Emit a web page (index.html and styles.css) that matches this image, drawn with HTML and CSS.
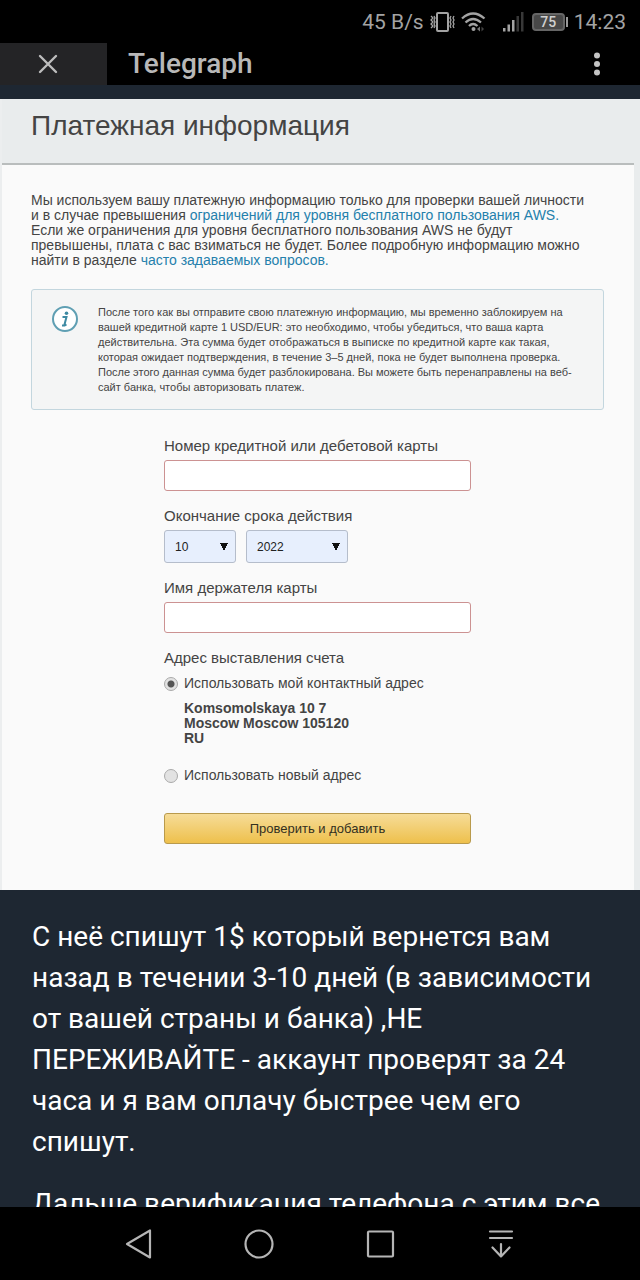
FILE: index.html
```html
<!DOCTYPE html>
<html lang="ru">
<head>
  <meta charset="UTF-8">
  <meta name="viewport" content="width=device-width, initial-scale=1.0">
  <title>Telegraph</title>
  <link rel="stylesheet" href="styles.css">
</head>
<body>
  <div class="status-bar">
    <span>45 B/s</span>
    <svg class="icon-vibrate" width="26" height="20" viewBox="0 0 26 20" fill="none" stroke="#a3a3a3">
      <rect x="7" y="1" width="11" height="18" rx="1" stroke-width="2"/>
      <path d="M1 4l2 2-2 2 2 2-2 2 2 2-2 2M4 4l1 2-1 2 1 2-1 2 1 2-1 2M21 4l-1 2 1 2-1 2 1 2-1 2 1 2M24 4l-1 2 1 2-1 2 1 2-1 2 1 2" stroke-width="1.3"/>
    </svg>
    <svg class="icon-wifi" width="25" height="20" viewBox="0 0 25 20" fill="none" stroke="#a3a3a3" stroke-width="2.300">
      <path d="M1 6.500Q12 -3.500 23.500 6.500M4.500 10.500Q12 3.500 20 10.500M8 14Q12 10 16.500 14"/>
      <circle cx="12.500" cy="17" r="2" fill="#a3a3a3" stroke="none"/>
      <path d="M19 14.500v5l-3-2.500z" fill="#777" stroke="none"/>
      <path d="M20.500 14.500v5l2.500-2.500z" fill="#444" stroke="none"/>
    </svg>
    <svg class="icon-signal" width="22" height="20" viewBox="0 0 22 20">
      <path d="M1 16h2.500v3.500H1zM5.500 12.500H8v7H5.500zM10 8h2.500v11.500H10z" fill="#a3a3a3"/>
      <path d="M14.500 4H17v15.500h-2.500zM19 0h2.500v19.500H19z" fill="#383838"/>
    </svg>
    <span class="battery">75</span>
    <span>14:23</span>
  </div>

  <header class="tab-bar">
    <button class="close" type="button" aria-label="Закрыть">
      <svg width="20" height="20" viewBox="0 0 20 20" fill="none" stroke="#bdbdbd" stroke-width="2.400" stroke-linecap="round">
        <path d="M2 2l16 16M18 2L2 18"/>
      </svg>
    </button>
    <h1 class="tab-title">Telegraph</h1>
    <button class="more" type="button" aria-label="Меню">
      <svg width="8" height="24" viewBox="0 0 8 24" fill="#c4c4c4">
        <circle cx="4" cy="3.500" r="3"/>
        <circle cx="4" cy="12" r="3"/>
        <circle cx="4" cy="20.500" r="3"/>
      </svg>
    </button>
  </header>

  <main class="article">
    <section class="payment">
      <h2 class="payment-title">Платежная информация</h2>
      <div class="payment-body">
        <p class="intro">Мы используем вашу платежную информацию только для проверки вашей личности<br>
          и в случае превышения <a href="#">ограничений для уровня бесплатного пользования AWS.</a><br>
          Если же ограничения для уровня бесплатного пользования AWS не будут<br>
          превышены, плата с вас взиматься не будет. Более подробную информацию можно<br>
          найти в разделе <a href="#">часто задаваемых вопросов.</a></p>

        <div class="notice">
          <svg class="notice-icon" width="28" height="28" viewBox="0 0 28 28">
            <circle cx="14" cy="14" r="12" fill="#fff" stroke="#5f9fb3" stroke-width="2"/>
            <circle cx="15.500" cy="8.200" r="1.800" fill="#3d8aa3"/>
            <path d="M11.500 12h4l-2 7.500q-.2 1 .8.700l1.200-.7M11 20.500h3" fill="none" stroke="#3d8aa3" stroke-width="2"/>
          </svg>
          <p>После того как вы отправите свою платежную информацию, мы временно заблокируем на<br>
            вашей кредитной карте 1 USD/EUR: это необходимо, чтобы убедиться, что ваша карта<br>
            действительна. Эта сумма будет отображаться в выписке по кредитной карте как такая,<br>
            которая ожидает подтверждения, в течение 3–5 дней, пока не будет выполнена проверка.<br>
            После этого данная сумма будет разблокирована. Вы можете быть перенаправлены на веб-<br>
            сайт банка, чтобы авторизовать платеж.</p>
        </div>

        <form class="card-form">
          <div class="field">
            <label for="card-number">Номер кредитной или дебетовой карты</label>
            <input class="text-input" id="card-number" type="text">
          </div>
          <div class="field">
            <label for="month">Окончание срока действия</label>
            <div class="selects">
              <select class="select month" id="month">
                <option>10</option>
              </select>
              <select class="select year" id="year" aria-label="Год">
                <option>2022</option>
              </select>
            </div>
          </div>
          <div class="field">
            <label for="holder">Имя держателя карты</label>
            <input class="text-input" id="holder" type="text">
          </div>
          <fieldset class="address">
            <legend>Адрес выставления счета</legend>
            <label class="radio"><input type="radio" name="address" checked>Использовать мой контактный адрес</label>
            <address>Komsomolskaya 10 7<br>Moscow Moscow 105120<br>RU</address>
            <label class="radio"><input type="radio" name="address">Использовать новый адрес</label>
          </fieldset>
          <button class="submit" type="button">Проверить и добавить</button>
        </form>
      </div>
    </section>

    <div class="text">
      <p>С неё спишут 1$ который вернется вам назад в течении 3-10 дней (в зависимости от вашей страны и банка) ,НЕ ПЕРЕЖИВАЙТЕ - аккаунт проверят за 24 часа и я вам оплачу быстрее чем его спишут.</p>
      <p>Дальше верификация телефона с этим все</p>
    </div>
  </main>

  <nav class="nav-bar">
    <button type="button" aria-label="Назад">
      <svg width="32" height="32" viewBox="0 0 32 32"><path d="M28 2.500v27L5 16z"/></svg>
    </button>
    <button type="button" aria-label="Домой">
      <svg width="32" height="32" viewBox="0 0 32 32"><circle cx="16" cy="16" r="13.500"/></svg>
    </button>
    <button type="button" aria-label="Недавние">
      <svg width="32" height="32" viewBox="0 0 32 32"><rect x="3" y="3.500" width="25" height="25" rx="1"/></svg>
    </button>
    <button type="button" aria-label="Шторка">
      <svg width="32" height="32" viewBox="0 0 32 32"><path d="M4 3.500h22M4 10h22M15 16v12.500M6.500 19.500l8.500 9 8.500-9"/></svg>
    </button>
  </nav>
</body>
</html>
```
FILE: styles.css
```css
* {
  box-sizing: border-box;
}

body {
  margin: 0;
  height: 100vh;
  display: flex;
  flex-direction: column;
  overflow: hidden;
  background-color: #000;
  font-family: Roboto, sans-serif;
}

h1, h2, p {
  margin: 0;
}

button {
  padding: 0;
  border: 0;
  background: none;
  font-family: inherit;
}

svg {
  display: block;
}

/* Status bar */
.status-bar {
  flex: none;
  display: flex;
  justify-content: flex-end;
  align-items: center;
  height: 43px;
  padding-right: 14px;
  color: #a3a3a3;
  font-size: 21px;
}

.icon-vibrate {
  margin-left: 6px;
}

.icon-wifi {
  margin-left: 5px;
}

.icon-signal {
  margin-left: 16px;
}

.battery {
  position: relative;
  width: 33px;
  height: 18px;
  margin: 0 9px 0 8px;
  border: 2px solid #666;
  border-radius: 4px;
  background-color: #484848;
  color: #d0d0d0;
  font-size: 14px;
  font-weight: 500;
  line-height: 14px;
  text-align: center;
}

.battery::after {
  content: "";
  position: absolute;
  top: 2px;
  right: -5px;
  width: 2px;
  height: 10px;
  background-color: #999;
}

/* Tab bar */
.tab-bar {
  flex: none;
  display: flex;
  align-items: center;
  height: 42px;
}

.close {
  display: flex;
  justify-content: center;
  align-items: center;
  width: 107px;
  height: 42px;
  padding-right: 11px;
  background-color: #242426;
}

.tab-title {
  flex: 1;
  padding-left: 21px;
  color: #b8b8b8;
  font-size: 28px;
  font-weight: 500;
  line-height: 42px;
}

.more {
  margin-right: 39px;
}

/* Article */
.article {
  flex: 1;
  min-height: 0;
  padding-top: 14px;
  overflow: hidden;
  background-color: #1e2732;
}

.payment {
  background-color: #fafafa;
  border-left: 2px solid #eceeef;
  border-right: 6px solid #e9eced;
  color: #444;
  font-family: "Liberation Sans", Arial, sans-serif;
  font-size: 14px;
  line-height: 15px;
}

.payment-title {
  padding: 11px 29px 21px;
  border-bottom: 2px solid #b9bdbd;
  background-color: #e9eced;
  font-size: 28px;
  font-weight: 400;
  line-height: 32px;
}

.payment-body {
  padding: 28px 30px 46px 29px;
}

.intro a {
  color: #2480ac;
  text-decoration: none;
}

.notice {
  display: flex;
  gap: 19px;
  margin-top: 21px;
  padding: 15px 18px 14px 19px;
  border: 1px solid #c3d6de;
  border-radius: 3px;
  background-color: #f4f5f5;
  font-size: 11px;
  white-space: nowrap;
}

.notice-icon {
  flex: none;
}

.card-form {
  margin: 28px 133px 0;
}

.field {
  display: flex;
  flex-direction: column;
  gap: 7px;
  margin-bottom: 17px;
}

.field label,
.address legend {
  font-size: 15px;
}

.text-input {
  width: 100%;
  height: 31px;
  padding: 0 10px;
  border: 1px solid #cc9292;
  border-radius: 3px;
  background-color: #fff;
}

.selects {
  display: flex;
  gap: 10px;
}

.select {
  height: 33px;
  padding: 0 10px;
  border: 1px solid #b5bdcb;
  border-radius: 3px;
  appearance: none;
  background: #e7effd;
  background-image: conic-gradient(from -27deg at 50% 100%, #111 54deg, transparent 0);
  background-position: right 7px center;
  background-repeat: no-repeat;
  background-size: 8px 8px;
  color: #222;
  font-family: inherit;
  font-size: 12px;
}

.month {
  width: 72px;
}

.year {
  width: 102px;
}

.address {
  margin: 0;
  padding: 0;
  border: 0;
}

.address legend {
  padding: 0;
}

.address address {
  margin: 10px 0 22px 20px;
  font-style: normal;
  font-weight: 700;
}

.radio {
  display: flex;
  align-items: center;
  gap: 6px;
  margin-top: 11px;
}

.radio input {
  appearance: none;
  flex: none;
  width: 14px;
  height: 14px;
  margin: 0;
  border: 1px solid #aaa;
  border-radius: 50%;
  background-color: #e2e2e2;
}

.radio input:checked {
  background-image: radial-gradient(circle, #555 3px, transparent 4px);
}

.submit {
  width: 100%;
  height: 31px;
  margin-top: 30px;
  border: 1px solid #b99a4c;
  border-radius: 3px;
  background-image: linear-gradient(#f6dc98, #eec04c);
  color: #33301f;
  font-size: 13px;
}

.text {
  padding: 26px 32px 0;
  color: #fff;
  font-size: 28px;
  line-height: 41px;
}

.text p {
  margin-bottom: 21px;
}

/* Navigation bar */
.nav-bar {
  flex: none;
  display: flex;
  justify-content: space-between;
  align-items: center;
  height: 73px;
  padding: 0 122px;
}

.nav-bar svg {
  fill: none;
  stroke: #b5b5b5;
  stroke-width: 2.2;
  stroke-linecap: round;
  stroke-linejoin: round;
}
```
